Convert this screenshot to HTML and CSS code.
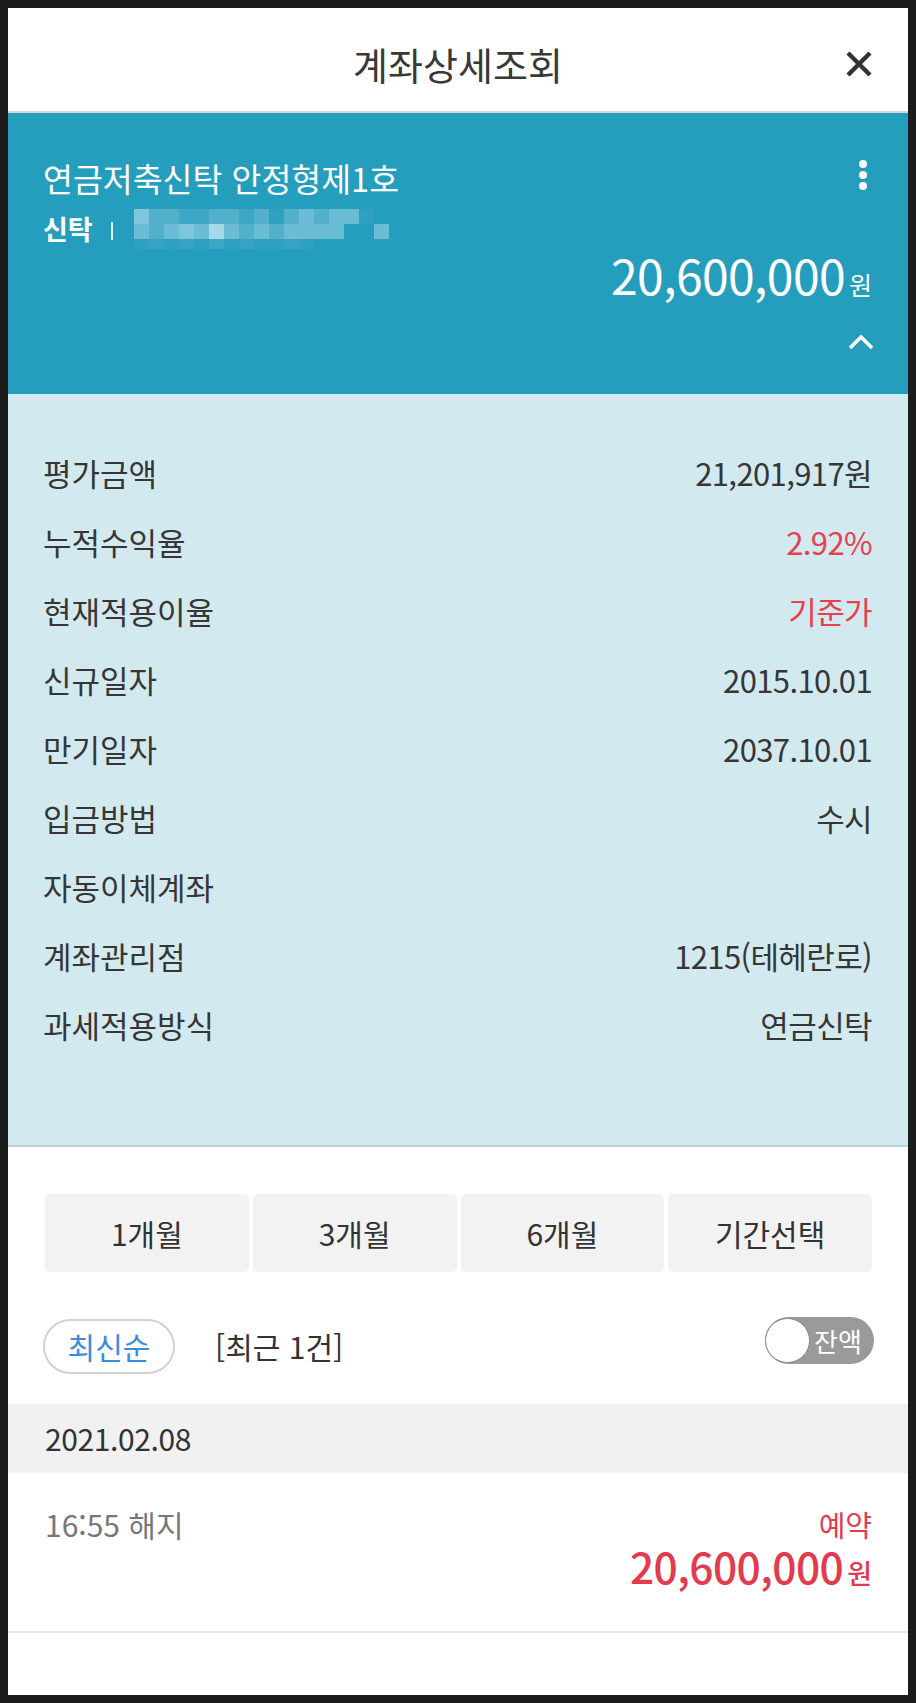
FILE: index.html
```html
<!DOCTYPE html>
<html lang="ko">
<head>
<meta charset="utf-8">
<title>계좌상세조회</title>
<link rel="stylesheet" href="styles.css">
</head>
<body>
<div class="screen">
  <header class="topbar">
    <h1 class="title">계좌상세조회</h1>
    <button class="close" type="button" aria-label="닫기">
      <svg width="28" height="28" viewBox="0 0 28 28"><path d="M3 3 L25 25 M25 3 L3 25" stroke="#333" stroke-width="4.4" fill="none"/></svg>
    </button>
  </header>

  <section class="summary">
    <div class="summary-top">
      <div class="name">연금저축신탁 안정형제1호</div>
      <div class="kebab"><i></i><i></i><i></i></div>
    </div>
    <div class="acct">
      <span class="type">신탁</span>
      <span class="sep"></span>
      <div class="mask">
        <i class="d"></i><i class="b"></i><i class="b"></i><i class="c"></i><i class="c"></i><i class="b"></i><i class="b"></i><i class="c"></i><i class="b"></i><i class="f"></i><i class="b"></i><i class="a"></i><i class="b"></i><i class="a"></i><i class="a"></i><i class="f"></i><i class="n"></i>
        <i class="a"></i><i class="b"></i><i class="a"></i><i class="d"></i><i class="a"></i><i class="e"></i><i class="a"></i><i class="b"></i><i class="a"></i><i class="b"></i><i class="a"></i><i class="a"></i><i class="a"></i><i class="a"></i><i class="n"></i><i class="n"></i><i class="a"></i>
        <i class="f"></i><i class="g"></i><i class="f"></i><i class="g"></i><i class="f"></i><i class="c"></i><i class="f"></i><i class="g"></i><i class="f"></i><i class="f"></i><i class="g"></i><i class="f"></i><i class="n"></i><i class="n"></i><i class="n"></i><i class="n"></i><i class="n"></i>
      </div>
    </div>
    <div class="balance"><span class="num">20,600,000</span><span class="won">원</span></div>
    <div class="collapse">
      <svg width="26" height="16" viewBox="0 0 26 16"><polyline points="2,14 13,3 24,14" stroke="#fff" stroke-width="3.6" fill="none"/></svg>
    </div>
  </section>

  <section class="details">
    <div class="row"><span class="label">평가금액</span><span class="value">21,201,917원</span></div>
    <div class="row"><span class="label">누적수익율</span><span class="value red">2.92%</span></div>
    <div class="row"><span class="label">현재적용이율</span><span class="value red">기준가</span></div>
    <div class="row"><span class="label">신규일자</span><span class="value">2015.10.01</span></div>
    <div class="row"><span class="label">만기일자</span><span class="value">2037.10.01</span></div>
    <div class="row"><span class="label">입금방법</span><span class="value">수시</span></div>
    <div class="row"><span class="label">자동이체계좌</span><span class="value"></span></div>
    <div class="row"><span class="label">계좌관리점</span><span class="value">1215(테헤란로)</span></div>
    <div class="row"><span class="label">과세적용방식</span><span class="value">연금신탁</span></div>
  </section>

  <section class="history">
    <div class="periods">
      <button class="period" type="button">1개월</button>
      <button class="period" type="button">3개월</button>
      <button class="period" type="button">6개월</button>
      <button class="period" type="button">기간선택</button>
    </div>
    <div class="sortbar">
      <button class="sort" type="button">최신순</button>
      <span class="count">[최근 1건]</span>
      <div class="toggle"><span class="knob"></span><span class="toggle-text">잔액</span></div>
    </div>
  </section>

  <div class="date-bar">2021.02.08</div>

  <div class="txn">
    <div class="txn-left">16:55 해지</div>
    <div class="txn-right">
      <div class="txn-status">예약</div>
      <div class="txn-amount"><span class="num">20,600,000</span><span class="won">원</span></div>
    </div>
  </div>
</div>
</body>
</html>
```

FILE: styles.css
```css
html, body {
  margin: 0;
  padding: 0;
  background: #1c1c1c;
}

body {
  font-family: "Noto Sans CJK KR", "Noto Sans", sans-serif;
  color: #333;
}

.screen {
  margin: 8px;
  height: 1687px;
  background: #fff;
  overflow: hidden;
}

/* header */
.topbar {
  height: 105px;
  box-sizing: border-box;
  padding: 9px 35px 0 35px;
  display: grid;
  grid-template-columns: 1fr auto 1fr;
  align-items: center;
  border-bottom: 2px solid #d6d6d6;
}

.title {
  grid-column: 2;
  margin: 0;
  font-size: 38px;
  line-height: 44px;
  font-weight: 400;
  color: #383838;
}

.close {
  grid-column: 3;
  justify-self: end;
  border: 0;
  padding: 0;
  background: none;
  width: 28px;
  height: 28px;
  display: flex;
}

/* teal summary */
.summary {
  background: #259dbd;
  color: #fff;
  padding: 45px 36px 44px 35px;
}

.summary-top {
  display: flex;
  justify-content: space-between;
  align-items: flex-start;
  height: 40px;
}

.name {
  font-size: 32.5px;
  line-height: 40px;
  font-weight: 400;
}

.kebab {
  display: flex;
  flex-direction: column;
  gap: 3px;
  margin-top: 2px;
  margin-right: 5px;
}

.kebab i {
  display: block;
  width: 8px;
  height: 8px;
  border-radius: 50%;
  background: #fff;
}

.acct {
  margin-top: 16px;
  height: 30px;
  display: flex;
  align-items: center;
}

.type {
  font-size: 27px;
  line-height: 30px;
  font-weight: 700;
}

.sep {
  width: 2px;
  height: 18px;
  background: #e6f4f8;
  margin: 4px 21px 0 18px;
}

.mask {
  display: grid;
  grid-template-columns: repeat(17, 15px);
  grid-template-rows: 15px 15px 10px;
  margin: -5px 0 -5px 0;
}

.mask i { display: block; }
.mask .a { background: #6bbdd5; }
.mask .b { background: #52b0cb; }
.mask .c { background: #3ea7c5; }
.mask .d { background: #7dc6db; }
.mask .e { background: #a6d9e7; }
.mask .f { background: #2ea1c0; }
.mask .g { background: #35a4c2; }
.mask .n { background: transparent; }

.balance {
  margin-top: 5px;
  text-align: right;
  font-size: 48px;
  line-height: 50px;
  height: 50px;
}

.balance .num {
  letter-spacing: -0.6px;
}

.balance .won {
  font-size: 25px;
  line-height: 1;
  margin-left: 4px;
}

.collapse {
  margin-top: 37px;
  margin-right: -2px;
  display: flex;
  justify-content: flex-end;
  height: 14px;
}

.collapse svg { margin-top: -2px; }

/* details */
.details {
  background: #d3e9f0;
  padding: 44px 36px 86px 35px;
  border-bottom: 2px solid #bfd3da;
}

.row {
  display: flex;
  justify-content: space-between;
  height: 69px;
  line-height: 69px;
  font-size: 31px;
  color: #363636;
}

.value {
  letter-spacing: -0.6px;
}

.value.red { color: #e8404f; }

/* history */
.history {
  padding: 47px 36px 0 37px;
}

.periods {
  display: grid;
  grid-template-columns: repeat(4, 1fr);
  gap: 4px;
}

.period {
  height: 78px;
  border: 0;
  border-radius: 5px;
  background: #f2f2f2;
  font-family: inherit;
  font-size: 30px;
  color: #333;
  padding: 0;
}

.sortbar {
  margin-top: 47px;
  height: 55px;
  display: flex;
  align-items: flex-start;
}

.sort {
  margin-left: -2px;
  width: 132px;
  height: 55px;
  box-sizing: border-box;
  border: 2px solid #d2d2d2;
  border-radius: 28px;
  background: #fff;
  font-family: inherit;
  font-size: 30px;
  line-height: 1;
  color: #3a8ddd;
  padding: 0 0 2px 0;
}

.count {
  margin-left: 40px;
  font-size: 30px;
  line-height: 55px;
  color: #333;
}

.toggle {
  margin-left: auto;
  margin-right: -2px;
  margin-top: -2px;
  width: 109px;
  height: 47px;
  border-radius: 24px;
  background: #9a9a9a;
  display: flex;
  align-items: center;
}

.knob {
  width: 45px;
  height: 45px;
  box-sizing: border-box;
  border-radius: 50%;
  background: #fff;
  border: 1px solid #8a8a8a;
}

.toggle-text {
  margin-left: 4px;
  font-size: 26px;
  color: #fff;
  line-height: 45px;
}

/* date */
.date-bar {
  margin-top: 30px;
  height: 69px;
  line-height: 69px;
  padding-left: 37px;
  background: #f1f1f1;
  font-size: 30px;
  letter-spacing: -0.4px;
  color: #333;
}

/* transaction */
.txn {
  height: 160px;
  box-sizing: border-box;
  padding: 33px 36px 0 37px;
  border-bottom: 2px solid #e8e8e8;
  display: flex;
  justify-content: space-between;
  align-items: flex-start;
}

.txn-left {
  font-size: 30px;
  line-height: 36px;
  color: #777;
}

.txn-right {
  text-align: right;
  color: #e23a4e;
}

.txn-status {
  font-size: 29px;
  line-height: 36px;
}

.txn-amount {
  margin-top: 0;
  font-size: 42.5px;
  line-height: 48px;
  height: 48px;
  font-weight: 500;
}

.txn-amount .num {
  letter-spacing: -0.6px;
}

.txn-amount .won {
  font-size: 27px;
  line-height: 1;
  margin-left: 4px;
}
```
